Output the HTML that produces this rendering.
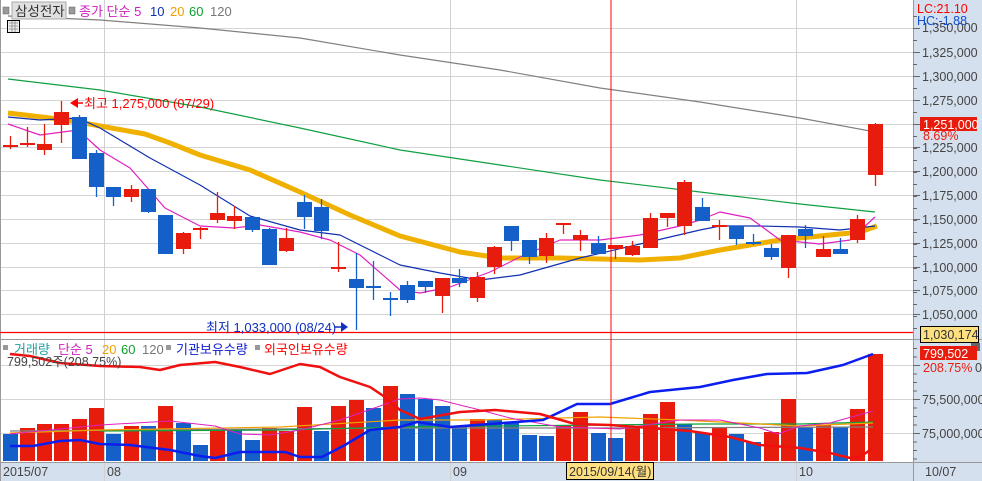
<!DOCTYPE html>
<html><head><meta charset="utf-8">
<style>
html,body{margin:0;padding:0;background:#fff;}
svg{display:block;font-family:"Liberation Sans","Noto Sans CJK KR","NanumGothic",sans-serif;}
</style></head>
<body>
<svg id="s" width="982" height="481" viewBox="0 0 982 481" xmlns="http://www.w3.org/2000/svg">
<rect x="0" y="0" width="982" height="481" fill="#fff"/>
<!-- right axis bg -->
<rect x="913" y="0" width="69" height="481" fill="#d5e0ee"/>
<!-- date axis bg -->
<rect x="0" y="462" width="982" height="19" fill="#d5e0ee"/>
<g id="grid" stroke="#d4d4d4" stroke-width="1"></g>
<line x1="104.5" y1="0" x2="104.5" y2="481" stroke="#d0d0d0"/>
<line x1="450.5" y1="0" x2="450.5" y2="481" stroke="#d0d0d0"/>
<line x1="796.5" y1="0" x2="796.5" y2="481" stroke="#d0d0d0"/>
<line x1="0.5" y1="0" x2="0.5" y2="481" stroke="#999"/>
<line x1="913.5" y1="0" x2="913.5" y2="481" stroke="#999"/>
<line x1="0" y1="339.5" x2="982" y2="339.5" stroke="#999"/>
<line x1="0" y1="462.5" x2="982" y2="462.5" stroke="#999"/>
<g id="lines"></g>
<g id="cndl"></g>
<g id="vol"></g>
<g id="vlines"></g>
<!-- lowest line -->
<line x1="0" y1="332.5" x2="913" y2="332.5" stroke="#f00" stroke-width="1.3"/>
<!-- cursor -->
<line x1="611" y1="0" x2="611" y2="462" stroke="#f00" stroke-width="1"/>
<g id="ticks" stroke="#666"></g>
<g id="labels" font-size="12.5" fill="#444"></g>
<!-- legend -->
<rect x="3" y="7" width="6" height="7" fill="#999" stroke="#666" stroke-width="0.5"/>
<rect x="12" y="2" width="54" height="17" fill="#e0e0e0" stroke="#aaa"/>
<text x="15" y="16" font-size="13.5" fill="#333">삼성전자</text>
<rect x="69" y="7" width="6" height="7" fill="#999" stroke="#666" stroke-width="0.5"/>
<text x="79" y="16" font-size="13" fill="#d020c0">종가 단순 5</text>
<text x="150" y="16" font-size="13" fill="#1030b0">10</text>
<text x="170" y="16" font-size="13" fill="#f0a000">20</text>
<text x="189" y="16" font-size="13" fill="#10a030">60</text>
<text x="210" y="16" font-size="13" fill="#777">120</text>
<rect x="7.5" y="20.5" width="12" height="12" fill="#eee" stroke="#000"/>
<path d="M9 23h9M9 26h9M9 29h9M12 21v11M15 21v11" stroke="#888" stroke-width="0.8"/>
<!-- annotations -->
<path d="M70 103 l8 -5 v10 z" fill="#f00"/>
<line x1="76" y1="103" x2="83" y2="103" stroke="#f00" stroke-width="1.5"/>
<text x="84" y="108" font-size="13" fill="#f00">최고 1,275,000 (07/29)</text>
<text x="206" y="332" font-size="13" fill="#1030c0">최저 1,033,000 (08/24)</text>
<line x1="334" y1="327" x2="342" y2="327" stroke="#1030c0" stroke-width="1.5"/>
<path d="M348 327 l-7 -5 v10 z" fill="#1030c0"/>
<!-- top right -->
<text x="917" y="13" font-size="12.5" fill="#f00">LC:21.10</text>
<text x="917" y="25" font-size="12.5" fill="#1050d0">HC:-1.88</text>
<rect x="920" y="117" width="57" height="14" fill="#e81c0c"/>
<text x="923" y="129" font-size="12.5" fill="#fff">1,251,000</text>
<text x="923" y="140" font-size="12.5" fill="#e81c0c">8.69%</text>
<rect x="920.5" y="326.5" width="58" height="16" fill="#ffe080" stroke="#000"/>
<text x="923" y="339" font-size="12.5" fill="#333">1,030,174</text>
<rect x="971" y="343" width="9" height="8" fill="#666"/>
<rect x="920" y="346" width="57" height="14" fill="#e81c0c"/>
<text x="923" y="358" font-size="12.5" fill="#fff">799,502</text>
<text x="923" y="372" font-size="12.5" fill="#e81c0c">208.75%</text>
<text x="975" y="372" font-size="12.5" fill="#444">0</text>
<!-- volume legend -->
<rect x="3" y="345" width="5" height="5" fill="#999"/>
<text x="14" y="354" font-size="13" fill="#20a0a0">거래량</text>
<text x="58" y="354" font-size="13" fill="#d020c0">단순 5</text>
<text x="102" y="354" font-size="13" fill="#f0a000">20</text>
<text x="121" y="354" font-size="13" fill="#10a030">60</text>
<text x="142" y="354" font-size="13" fill="#777">120</text>
<rect x="166" y="345" width="5" height="5" fill="#999"/>
<text x="176" y="354" font-size="13" fill="#1020d0">기관보유수량</text>
<rect x="255" y="345" width="5" height="5" fill="#999"/>
<text x="264" y="354" font-size="13" fill="#f00">외국인보유수량</text>
<text x="7" y="366" font-size="12.5" fill="#444">799,502주(208.75%)</text>
<!-- dates -->
<text x="3" y="476" font-size="12.5" fill="#444">2015/07</text>
<text x="107" y="476" font-size="12.5" fill="#444">08</text>
<text x="453" y="476" font-size="12.5" fill="#444">09</text>
<text x="799" y="476" font-size="12.5" fill="#444">10</text>
<text x="925" y="476" font-size="12.5" fill="#444">10/07</text>
<rect x="566.5" y="462.5" width="87" height="17" fill="#ffe080" stroke="#000"/>
<text x="569" y="476" font-size="12.5" fill="#333">2015/09/14(월)</text>
</svg>
<script>
var NS="http://www.w3.org/2000/svg";
function el(p,t,a){var e=document.createElementNS(NS,t);for(var k in a)e.setAttribute(k,a[k]);document.getElementById(p).appendChild(e);return e;}
// grid
[28,52,76,100,124,147,171,195,219,243,267,290,314].forEach(function(y){el("grid","line",{x1:0,y1:y+.5,x2:913,y2:y+.5});el("ticks","line",{x1:913,y1:y+.5,x2:920,y2:y+.5});});
[365,399,433].forEach(function(y){el("grid","line",{x1:0,y1:y+.5,x2:913,y2:y+.5});el("ticks","line",{x1:913,y1:y+.5,x2:920,y2:y+.5});});
for(var y=16;y<336;y+=12){el("ticks","line",{x1:913,y1:y+.5,x2:917,y2:y+.5});}
for(var y=348;y<462;y+=8.5){el("ticks","line",{x1:913,y1:y+.5,x2:917,y2:y+.5});}
var lab=[[52,"1,325,000"],[76,"1,300,000"],[100,"1,275,000"],[147,"1,225,000"],[171,"1,200,000"],[195,"1,175,000"],[219,"1,150,000"],[243,"1,125,000"],[267,"1,100,000"],[290,"1,075,000"],[314,"1,050,000"],[399,"75,500,000"],[433,"75,000,000"]];
lab.forEach(function(l){var t=el("labels","text",{x:922,y:l[0]+5});t.textContent=l[1];});
var t=el("labels","text",{x:922,y:32});t.textContent="1,350,000";
function pl(g,pts,c,w){el(g,"polyline",{points:pts.map(function(p){return p.join(",")}).join(" "),fill:"none",stroke:c,"stroke-width":w,"stroke-linejoin":"round"});}
pl("lines",[[8,16],[100,20],[200,28],[300,38],[400,55],[500,70],[600,88],[700,102],[800,118],[870,131]],"#808080",1.2);
pl("lines",[[8,79],[100,90],[200,107],[300,128],[400,150],[500,165],[600,180],[700,192],[800,204],[875,212]],"#10a040",1.2);
pl("lines",[[8,113],[50,118],[78,122],[100,126],[145,134],[170,143],[200,155],[250,170],[300,192],[350,215],[400,236],[460,252],[500,258],[560,258],[640,260],[680,258],[720,250],[780,240],[830,235],[860,232],[877,226]],"#f0b000",5);
pl("lines",[[8,117],[40,120],[78,118],[100,128],[150,158],[200,185],[250,216],[300,230],[340,235],[400,265],[440,273],[480,280],[520,275],[580,258],[640,244],[700,230],[720,226],[760,226],[800,227],[840,230],[875,226]],"#1030b0",1.2);
pl("lines",[[8,124],[40,135],[78,130],[100,150],[130,168],[165,208],[200,226],[234,228],[260,225],[300,232],[330,240],[360,255],[400,290],[420,293],[450,287],[490,272],[520,257],[560,240],[600,240],[640,235],[680,226],[700,220],[720,212],[750,218],[780,240],[820,244],[850,240],[875,217]],"#e020c0",1.2);
// candles [o/top,bottom,hi,lo,color]
var R="#e81c0c",B="#1460c8";
var c=[[145,146,136,149,R],[143,145,127,147,R],[144,150,124,155,R],[112,125,101,143,R],[117,159,115,159,B],[153,187,150,197,B],[187,197,187,206,B],[189,197,185,202,R],[189,212,189,213,B],[215,254,215,254,B],[233,249,232,254,R],[228,230,227,239,R],[213,220,192,223,R],[216,221,206,229,R],[217,230,217,232,B],[229,265,228,265,B],[238,251,228,252,R],[202,217,195,229,B],[207,231,199,239,B],[267,269,242,272,R],[279,288,253,330,B],[286,288,261,300,B],[298,300,292,316,B],[285,300,281,303,B],[281,287,281,293,B],[278,296,278,313,R],[278,283,269,287,B],[277,298,272,302,R],[247,267,246,274,R],[226,241,226,251,B],[240,257,240,264,B],[238,256,233,263,R],[223,225,223,234,R],[235,240,230,251,R],[243,254,236,254,B],[245,249,245,259,R],[246,255,241,256,R],[218,248,213,248,R],[213,218,213,227,R],[182,226,180,235,R],[207,221,198,221,B],[225,227,220,240,R],[226,239,226,245,B],[242,244,234,245,B],[248,257,244,260,B],[235,268,235,278,R],[229,236,225,248,B],[249,257,236,257,R],[249,254,238,254,B],[219,240,215,243,R],[124,175,123,186,R]];
c.forEach(function(d,i){var x=Math.round(9.5+17.3*i);
el("cndl","line",{x1:x+.5,y1:d[2],x2:x+.5,y2:d[3],stroke:d[4],"stroke-width":1.3});
var h=Math.max(d[1]-d[0],2);el("cndl","rect",{x:x-7,y:d[0],width:15,height:h,fill:d[4]});});
// volume
var v=[[434,B],[428,R],[424,R],[424,R],[419,R],[408,R],[434,B],[426,R],[426,B],[406,R],[423,B],[445,B],[429,R],[429,B],[440,B],[428,R],[431,R],[407,R],[431,B],[406,R],[400,R],[408,B],[386,R],[394,B],[399,B],[406,B],[427,B],[419,R],[420,B],[423,B],[435,B],[436,B],[425,R],[412,R],[433,B],[438,B],[426,R],[414,R],[402,R],[424,B],[433,B],[427,R],[434,B],[442,B],[432,R],[399,R],[427,B],[425,R],[427,B],[409,R],[354,R]];
v.forEach(function(d,i){var x=Math.round(9.5+17.3*i);el("vol","rect",{x:x-7,y:d[0],width:15,height:461-d[0],fill:d[1]});});
pl("vlines",[[10,431],[400,428],[600,428],[873,427]],"#808080",1.2);
pl("vlines",[[100,431],[280,430],[400,427],[500,426],[600,425],[700,424],[800,424],[873,422]],"#10a040",1.2);
pl("vlines",[[10,433],[100,430],[280,427],[400,420],[480,420],[600,417],[680,420],[800,426],[873,423]],"#f0a000",1.2);
pl("vlines",[[10,434],[50,430],[100,425],[170,421],[215,426],[240,434],[270,435],[300,430],[340,420],[400,399],[420,398],[440,400],[480,410],[510,418],[560,427],[620,429],[680,420],[720,420],[760,428],[778,434],[800,426],[830,423],[873,411]],"#e020c0",1);
pl("vlines",[[10,446],[33,446],[60,441],[80,440],[100,444],[130,445],[170,450],[200,456],[215,458],[240,452],[285,452],[300,457],[322,457],[345,445],[370,430],[400,427],[417,422],[450,427],[543,420],[577,404],[610,404],[650,392],[700,387],[733,380],[767,374],[807,373],[843,365],[873,354]],"#0a1ef0",2.5);
pl("vlines",[[10,354],[30,356],[60,363],[100,366],[140,367],[160,370],[180,365],[215,362],[240,367],[270,374],[300,364],[320,367],[340,377],[370,387],[385,397],[400,410],[420,419],[460,412],[495,410],[540,414],[575,424],[610,425],[650,428],[690,431],[730,437],[760,445],[800,448],[830,453],[850,458],[860,457],[873,448]],"#f01010",2.5);
</script>
</body></html>
